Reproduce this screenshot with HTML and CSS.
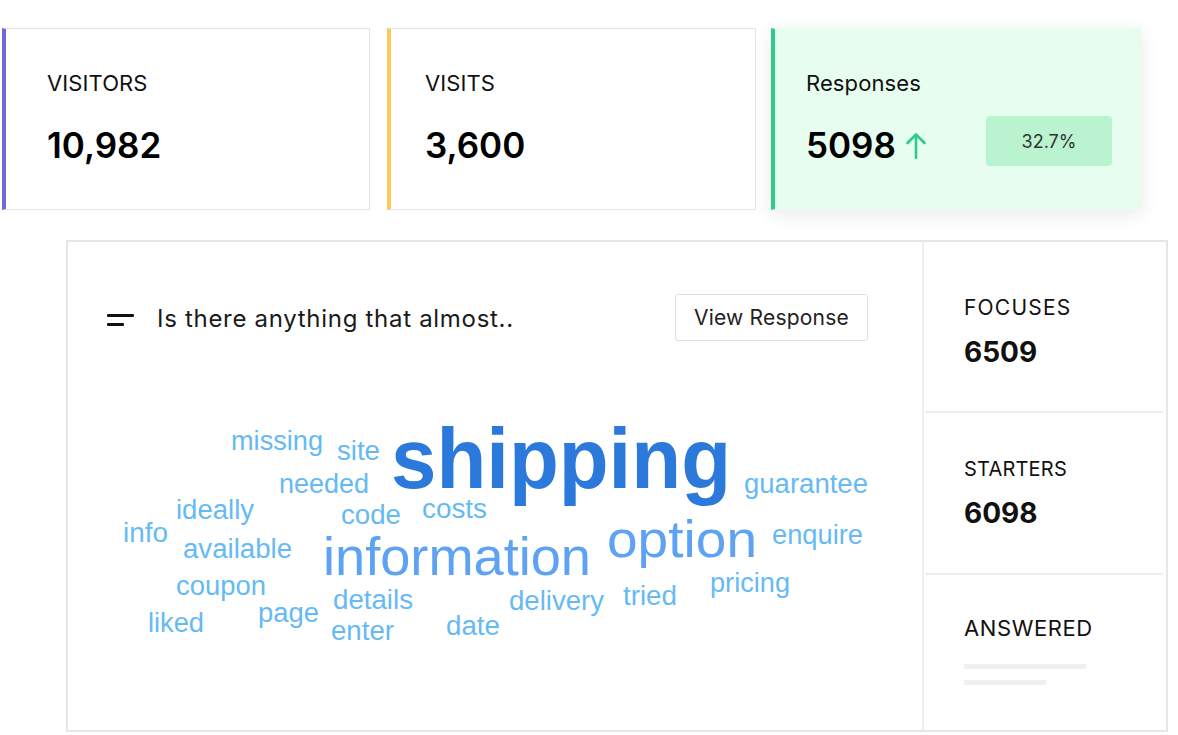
FILE: index.html
```html
<!DOCTYPE html>
<html lang="en">
<head>
<meta charset="utf-8">
<title>Survey analytics</title>
<link rel="stylesheet" href="styles.css">
</head>
<body>
<div class="stats">
  <div class="card card-visitors">
    <div class="card-label">VISITORS</div>
    <div class="card-value">10,982</div>
  </div>
  <div class="card card-visits">
    <div class="card-label">VISITS</div>
    <div class="card-value">3,600</div>
  </div>
  <div class="card card-responses">
    <div class="card-label">Responses</div>
    <div class="value-row">
      <div class="card-value">5098</div>
      <svg class="up-arrow" width="20" height="27" viewBox="0 0 20 27" aria-hidden="true">
        <path d="M10 26V2.5M1.5 11L10 2.5L18.5 11" fill="none" stroke="#2ecc8c" stroke-width="2.6" stroke-linecap="round" stroke-linejoin="round"/>
      </svg>
      <div class="badge">32.7%</div>
    </div>
  </div>
</div>

<div class="panel">
  <div class="main">
    <div class="question-row">
      <div class="question">
        <span class="q-icon"><span class="q-line q-line-long"></span><span class="q-line q-line-short"></span></span>
        <span class="q-text">Is there anything that almost..</span>
      </div>
      <button class="view-btn">View Response</button>
    </div>
    <svg class="cloud" width="761" height="260" viewBox="107 398 761 260">
      <text class="w-light" x="231" y="448" font-size="27" textLength="92" lengthAdjust="spacingAndGlyphs">missing</text>
      <text class="w-light" x="337" y="458" font-size="27" textLength="43" lengthAdjust="spacingAndGlyphs">site</text>
      <text class="w-dark" x="391" y="486" font-size="86" textLength="340" lengthAdjust="spacingAndGlyphs">shipping</text>
      <text class="w-light" x="279" y="491" font-size="27" textLength="90" lengthAdjust="spacingAndGlyphs">needed</text>
      <text class="w-light" x="744" y="491" font-size="27" textLength="124" lengthAdjust="spacingAndGlyphs">guarantee</text>
      <text class="w-light" x="176" y="517" font-size="27" textLength="78" lengthAdjust="spacingAndGlyphs">ideally</text>
      <text class="w-light" x="422" y="516" font-size="27" textLength="65" lengthAdjust="spacingAndGlyphs">costs</text>
      <text class="w-light" x="341" y="522" font-size="27" textLength="60" lengthAdjust="spacingAndGlyphs">code</text>
      <text class="w-light" x="123" y="540" font-size="27" textLength="45" lengthAdjust="spacingAndGlyphs">info</text>
      <text class="w-light" x="772" y="542" font-size="27" textLength="91" lengthAdjust="spacingAndGlyphs">enquire</text>
      <text class="w-mid" x="607" y="555" font-size="52" textLength="150" lengthAdjust="spacingAndGlyphs">option</text>
      <text class="w-light" x="183" y="556" font-size="27" textLength="109" lengthAdjust="spacingAndGlyphs">available</text>
      <text class="w-mid" x="323" y="573" font-size="53" textLength="268" lengthAdjust="spacingAndGlyphs">information</text>
      <text class="w-light" x="710" y="590" font-size="27" textLength="80" lengthAdjust="spacingAndGlyphs">pricing</text>
      <text class="w-light" x="176" y="593" font-size="27" textLength="90" lengthAdjust="spacingAndGlyphs">coupon</text>
      <text class="w-light" x="623" y="603" font-size="27" textLength="54" lengthAdjust="spacingAndGlyphs">tried</text>
      <text class="w-light" x="333" y="607" font-size="27" textLength="80" lengthAdjust="spacingAndGlyphs">details</text>
      <text class="w-light" x="509" y="608" font-size="27" textLength="95" lengthAdjust="spacingAndGlyphs">delivery</text>
      <text class="w-light" x="258" y="620" font-size="27" textLength="61" lengthAdjust="spacingAndGlyphs">page</text>
      <text class="w-light" x="148" y="630" font-size="27" textLength="56" lengthAdjust="spacingAndGlyphs">liked</text>
      <text class="w-light" x="446" y="633" font-size="27" textLength="54" lengthAdjust="spacingAndGlyphs">date</text>
      <text class="w-light" x="331" y="638" font-size="27" textLength="63" lengthAdjust="spacingAndGlyphs">enter</text>
    </svg>
  </div>
  <div class="side">
    <div class="metric metric-focuses">
      <div class="metric-label metric-label-wide">FOCUSES</div>
      <div class="metric-value">6509</div>
    </div>
    <div class="metric metric-starters">
      <div class="metric-label">STARTERS</div>
      <div class="metric-value">6098</div>
    </div>
    <div class="metric metric-answered">
      <div class="metric-label metric-label-lg">ANSWERED</div>
      <div class="skeleton skeleton-long"></div>
      <div class="skeleton skeleton-short"></div>
    </div>
  </div>
</div>
</body>
</html>
```

FILE: styles.css
```css
* { box-sizing: border-box; }

body {
  margin: 0;
  background: #ffffff;
  font-family: "Inter", "Noto Sans", "Liberation Sans", sans-serif;
  color: #111111;
}

/* ---------- top stat cards ---------- */
.stats {
  display: flex;
  padding: 28px 0 0 2px;
}

.card {
  height: 182px;
  border: 1px solid #e4e4e4;
  border-left: 4px solid #7367db;
  background: #ffffff;
}

.card-visitors {
  width: 368px;
  margin-right: 17px;
  padding: 41px 0 0 41px;
}

.card-visits {
  width: 369px;
  margin-right: 15px;
  border-left-color: #fdc95b;
  padding: 41px 0 0 34px;
}

.card-responses {
  width: 370px;
  border-color: transparent;
  border-left-color: #2ecc8c;
  background: #e6fdef;
  box-shadow: 0 4px 18px rgba(0, 0, 0, 0.09);
  padding: 41px 28px 0 31px;
}

.card-label {
  font-size: 22px;
  line-height: 26px;
  font-weight: 400;
  color: #111111;
  letter-spacing: 0.1px;
}

.card-value {
  margin-top: 27px;
  font-size: 35px;
  line-height: 44px;
  font-weight: 600;
  color: #000000;
}

.value-row {
  display: flex;
  align-items: flex-start;
  margin-top: 20px;
}

.value-row .card-value {
  margin-top: 7px;
}

.up-arrow {
  margin: 16px 0 0 10px;
}

.badge {
  margin-left: auto;
  width: 126px;
  height: 50px;
  border-radius: 4px;
  background: #baf3d0;
  display: flex;
  align-items: center;
  justify-content: center;
  font-size: 18px;
  color: #333333;
}

/* ---------- panel ---------- */
.panel {
  display: flex;
  margin: 30px 0 0 66px;
  width: 1102px;
  height: 492px;
  border: 2px solid #e6e6e6;
}

.main {
  flex: 1;
  padding: 52px 54px 0 39px;
  border-right: 2px solid #efefef;
}

.question-row {
  display: flex;
  align-items: center;
  justify-content: space-between;
}

.question {
  display: flex;
  align-items: center;
  gap: 23px;
  margin-top: 3px;
}

.q-icon {
  display: flex;
  flex-direction: column;
  gap: 6px;
  width: 27px;
  margin-top: 2px;
}

.q-line {
  display: block;
  height: 3px;
  border-radius: 1px;
  background: #111111;
}

.q-line-long { width: 27px; }
.q-line-short { width: 17px; }

.q-text {
  font-size: 24px;
  line-height: 28px;
  color: #1a1a1a;
  letter-spacing: 0.7px;
}

.view-btn {
  width: 193px;
  height: 47px;
  border: 1.5px solid #dedede;
  border-radius: 3px;
  background: #ffffff;
  font-family: inherit;
  font-size: 21px;
  letter-spacing: 0.2px;
  color: #222222;
  padding: 0;
}

.cloud {
  display: block;
  margin-top: 59px;
  font-family: "Liberation Sans", Arial, Helvetica, sans-serif;
}

.w-light { fill: #66baf4; }
.w-mid { fill: #5ea2f4; }
.w-dark { fill: #2b79da; font-weight: 700; }

/* ---------- side metrics ---------- */
.side {
  width: 242px;
  display: flex;
  flex-direction: column;
}

.metric {
  margin: 0 3px 0 1px;
  padding-left: 39px;
}

.metric-focuses {
  height: 171px;
  padding-top: 54px;
  border-bottom: 2px solid #eeeeee;
}

.metric-starters {
  height: 162px;
  padding-top: 44px;
  border-bottom: 2px solid #eeeeee;
}

.metric-answered {
  flex: 1;
  padding-top: 40px;
}

.metric-label {
  font-size: 20px;
  line-height: 24px;
  color: #111111;
  letter-spacing: 0.2px;
}

.metric-label-wide {
  font-size: 21px;
  letter-spacing: 1.2px;
}

.metric-label-lg {
  font-size: 22px;
  line-height: 26px;
  letter-spacing: 0.6px;
}

.metric-value {
  margin-top: 15px;
  font-size: 28px;
  line-height: 34px;
  font-weight: 700;
  color: #111111;
}

.skeleton {
  height: 5px;
  background: #f0f0f0;
}

.skeleton-long {
  width: 122px;
  margin-top: 23px;
}

.skeleton-short {
  width: 82px;
  margin-top: 11px;
}
```
